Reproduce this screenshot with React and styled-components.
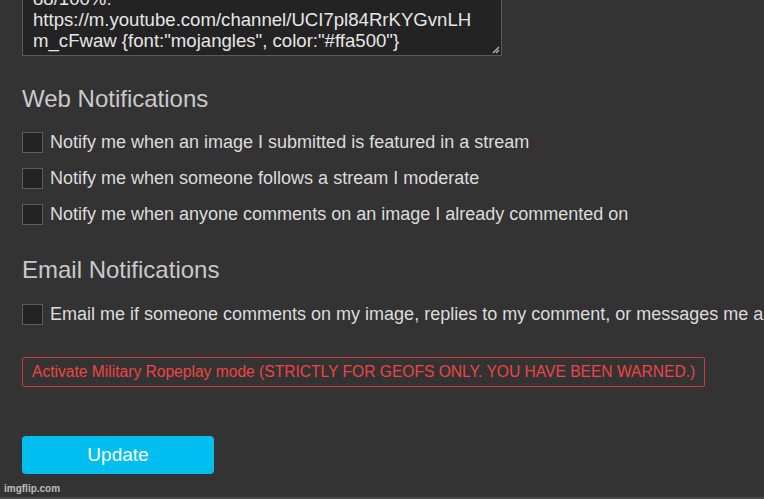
import React from 'react';
import styled, { createGlobalStyle } from 'styled-components';

const GlobalStyle = createGlobalStyle`
  html, body {
    margin: 0;
    padding: 0;
    background: #333333;
    overflow: hidden;
  }
  body {
    font-family: "Liberation Sans", Arial, sans-serif;
  }
`;

const Page = styled.div`
  width: 764px;
  height: 499px;
  display: flex;
  flex-direction: column;
  padding-left: 22px;
  box-sizing: border-box;
  overflow: hidden;
`;

const TextBox = styled.div`
  position: relative;
  width: 480px;
  height: 56px;
  box-sizing: border-box;
  background: #232323;
  border: 1px solid #5a5a5a;
  border-top: none;
  display: flex;
  flex-direction: column;
  justify-content: flex-end;
  overflow: hidden;
  padding: 0 10px 3.5px 10px;
  color: #e6e6e6;
  font-size: 18.6px;
  line-height: 21.3px;
`;

const Line = styled.div`
  white-space: nowrap;
`;

const Grip = styled.svg`
  position: absolute;
  right: 1px;
  bottom: 1px;
`;

const Heading = styled.h2`
  margin: ${p => p.$top}px 0 0 0;
  font-size: 24px;
  font-weight: normal;
  color: #c9c9c9;
  line-height: 26px;
`;

const List = styled.div`
  display: flex;
  flex-direction: column;
  gap: 16px;
  margin-top: ${p => p.$top}px;
`;

const Row = styled.label`
  display: flex;
  align-items: center;
  gap: 7px;
  height: 20px;
  white-space: nowrap;
  color: #dcdcdc;
  font-size: 18px;
`;

const Box = styled.span`
  flex: none;
  width: 19px;
  height: 19px;
  background: #232323;
  border: 1px solid #5c5c5c;
`;

const Warning = styled.div`
  margin-top: 33px;
  align-self: flex-start;
  width: 683px;
  height: 30px;
  box-sizing: border-box;
  border: 1px solid #c9383a;
  border-radius: 2px;
  display: flex;
  align-items: center;
  padding-left: 9px;
  color: #ee4444;
  font-size: 15.6px;
  white-space: nowrap;
`;

const Button = styled.button`
  margin-top: 49px;
  width: 192px;
  height: 38px;
  border: none;
  border-radius: 4px;
  background: #00bff0;
  color: #ffffff;
  font-family: "Liberation Sans", Arial, sans-serif;
  font-size: 19px;
  padding: 0;
`;

const Footer = styled.div`
  margin-top: auto;
  margin-left: -22px;
  height: 18px;
  display: flex;
  align-items: center;
  padding-left: 4px;
  color: #bdbdbd;
  font-size: 10px;
  font-weight: bold;
  border-bottom: 2px solid #4a4a4a;
`;

const webOptions = [
  'Notify me when an image I submitted is featured in a stream',
  'Notify me when someone follows a stream I moderate',
  'Notify me when anyone comments on an image I already commented on',
];

export default function App() {
  return (
    <Page>
      <GlobalStyle />
      <TextBox>
        <Line>88/100%:</Line>
        <Line>https://m.youtube.com/channel/UCI7pl84RrKYGvnLH</Line>
        <Line>m_cFwaw {'{'}font:"mojangles", color:"#ffa500"{'}'}</Line>
        <Grip width="10" height="10" viewBox="0 0 10 10">
          <path d="M9 3 L3 9 M9 6 L6 9" stroke="#bbbbbb" strokeWidth="1.2" />
        </Grip>
      </TextBox>

      <Heading $top={30}>Web Notifications</Heading>
      <List $top={20}>
        {webOptions.map(text => (
          <Row key={text}>
            <Box />
            {text}
          </Row>
        ))}
      </List>

      <Heading $top={33}>Email Notifications</Heading>
      <List $top={21}>
        <Row>
          <Box />
          Email me if someone comments on my image, replies to my comment, or messages me about something
        </Row>
      </List>

      <Warning>Activate Military Ropeplay mode (STRICTLY FOR GEOFS ONLY. YOU HAVE BEEN WARNED.)</Warning>

      <Button>Update</Button>

      <Footer>imgflip.com</Footer>
    </Page>
  );
}
